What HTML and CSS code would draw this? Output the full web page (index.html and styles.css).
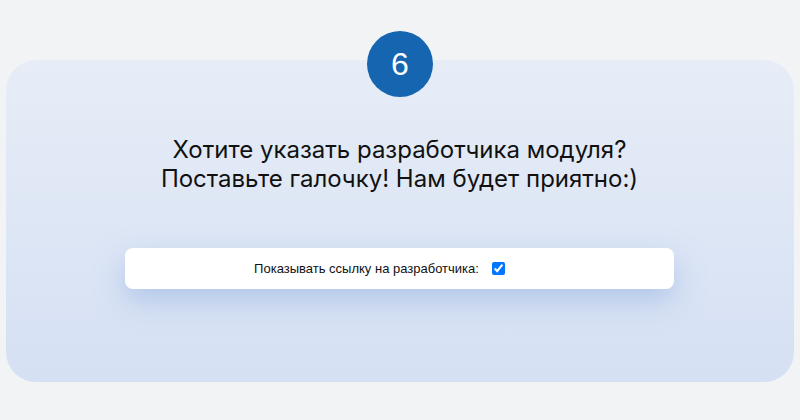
FILE: index.html
```html
<!DOCTYPE html>
<html lang="ru">

<head>
    <meta charset="UTF-8">
    <meta name="viewport" content="width=device-width, initial-scale=1.0">
    <title>Шаг 6</title>
    <link rel="stylesheet" href="styles.css">
</head>

<body>
    <div class="step-card">
        <div class="step-number">6</div>
        <h2 class="step-title">Хотите указать разработчика модуля?<br>Поставьте галочку! Нам будет приятно:)</h2>
        <div class="option-box">
            <label for="show-dev-link">Показывать ссылку на разработчика:</label>
            <input type="checkbox" id="show-dev-link" checked>
        </div>
    </div>
</body>

</html>
```

FILE: styles.css
```css
body {
    margin: 0;
    padding: 60px 6px 0;
    background-color: #f2f3f5;
    font-family: Inter, "Noto Sans", sans-serif;
}

.step-card {
    position: relative;
    height: 322px;
    box-sizing: border-box;
    padding: 75px 120px 0 119px;
    border-radius: 30px;
    background: linear-gradient(to bottom, #e7edf7, #d5e0f4);
    text-align: center;
}

.step-number {
    position: absolute;
    top: -29px;
    left: 50%;
    margin-left: -33px;
    width: 66px;
    height: 66px;
    border-radius: 50%;
    background-color: #1565b0;
    color: #fff;
    font-family: "Liberation Sans", Arial, sans-serif;
    font-size: 32px;
    line-height: 66px;
}

.step-title {
    margin: 0;
    font-size: 24px;
    font-weight: 400;
    line-height: 29px;
    color: #111;
}

.option-box {
    display: flex;
    align-items: center;
    justify-content: center;
    gap: 10px;
    margin-top: 55px;
    padding-right: 40px;
    height: 41px;
    border-radius: 8px;
    background-color: #fff;
    box-shadow: 0 12px 28px rgba(140, 172, 222, 0.5);
    font-family: "Liberation Sans", Arial, sans-serif;
    font-size: 13px;
    color: #111;
}

.option-box input {
    margin: 0 0 0 3px;
    width: 13px;
    height: 13px;
}
```
